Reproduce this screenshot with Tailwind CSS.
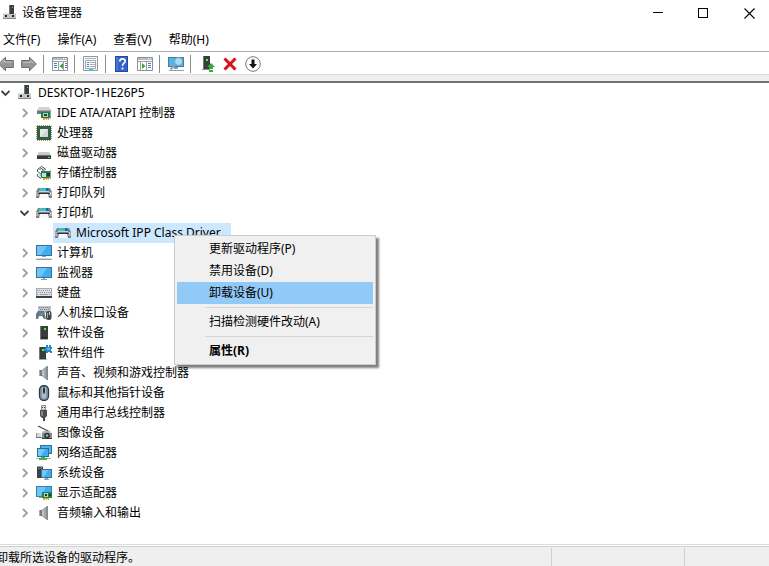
<!DOCTYPE html>
<html lang="zh-CN">
<head>
    <meta charset="UTF-8">
    <meta name="viewport" content="width=device-width, initial-scale=1.0">
    <title>设备管理器</title>
    <script src="https://cdn.jsdelivr.net/npm/@tailwindcss/browser@4"></script>
</head>
<body class="bg-white text-black text-[12px] leading-5 font-['Noto_Sans','Noto_Sans_CJK_SC',sans-serif]">

    <!-- Iconos -->
    <svg class="absolute size-0" aria-hidden="true">
        <symbol id="i-root" viewBox="0 0 16 16">
            <path d="M7 0h5v9H7z" fill="#3c3f3f"/><path d="M7 0h1v9H7z" fill="#777"/><path d="M10 2h1v1h-1z" fill="#3f3"/>
            <path d="M3 8h4v1h5V8h1l1 1v5H1v-5z" fill="#c3c7ca"/><path d="M3 8h4v1h5V8h1l1 1H1z" fill="#e0e2e4"/>
            <path d="M3 10h2v2H3zM10 10h2v2h-2z" fill="#222"/><path d="M1 13h13v1H1z" fill="#85898c"/>
        </symbol>
        <symbol id="i-ide" viewBox="0 0 16 16">
            <path d="M3 2h10l2 3H1z" fill="#d2d4d6"/><path d="M1 5h14v4H1z" fill="#70767a"/><path d="M1 5h14v1H1z" fill="#a7acaf"/>
            <path d="M5 7h10v6H5z" fill="#1f7a4c"/><path d="M7 8h5v4H7z" fill="#a5d8bd"/><path d="M8 9h3v2H8z" fill="#2b3b34"/>
            <path d="M14 5h1v9h-1z" fill="#9fa3a6"/><path d="M7 13h6v2h-1v-1h-1v1h-1v-1H9v1H7z" fill="#e6a11e"/>
        </symbol>
        <symbol id="i-cpu" viewBox="0 0 16 16">
            <path d="M1 .5h14M1 15.500h14M.5 1v14M15.500 1v14" stroke="#a8924a" stroke-dasharray="1 1" fill="none"/>
            <path d="M1 1h14v14H1z" fill="#2e6146"/><path d="M4 4h8v8H4z" fill="#e6e8e7"/><path d="M4 12L12 4v8z" fill="#d0d4d2"/>
        </symbol>
        <symbol id="i-disk" viewBox="0 0 16 16">
            <path d="M3 7h10l2 3H1z" fill="#c9cbcd"/><path d="M1 10h14v4H1z" fill="#38393b"/><path d="M1 10h14v1H1z" fill="#6c6e70"/><path d="M12 12h2v1h-2z" fill="#3f3"/>
        </symbol>
        <symbol id="i-storage" viewBox="0 0 16 16">
            <path d="M1.500 4.500l4-3 4 2.500-1 1.500M3.500 4.500l2-1 2 1.500-2.500 2M1.500 4.500v2l3.500 2.500M2 9l-1 1.500 4 3" fill="none" stroke="#494d50"/>
            <path d="M3 7.500l3 2.500-2 2z" fill="#b4b7b9"/>
            <path d="M5 6h10v7H5z" fill="#23804f"/><path d="M6 8h4v4H6z" fill="#c5e0d0"/><path d="M11 8h3v3h-3z" fill="#123f2a"/>
            <path d="M14 5h1v9h-1z" fill="#999da0"/><path d="M7 13h6v2h-1v-1h-1v1h-1v-1H9v1H7z" fill="#e6a11e"/>
        </symbol>
        <symbol id="i-printer" viewBox="0 0 16 16">
            <path d="M2 3h12l2 4v6H0V7z" fill="#7b8085"/><path d="M0 7h3v4H0zM13 7h3v4h-3z" fill="#a9adb1"/>
            <path d="M4 3h8l1 3H3z" fill="#4bb8e6"/><path d="M6 3h4v2H6z" fill="#35cf72"/><path d="M10 3h2l1 3h-3z" fill="#1b62d0"/>
            <path d="M3 6h10v1H3z" fill="#b9d6e2"/><path d="M2 8h12v1H2z" fill="#2e3236"/>
            <path d="M4 9h8l1 4H3z" fill="#f4f8fa"/><path d="M14 8h1v1h-1z" fill="#fff"/>
        </symbol>
        <symbol id="i-computer" viewBox="0 0 16 16">
            <path d="M0 0h16v11H0z" fill="#3f6f93"/><path d="M1 1h14v9H1z" fill="#3caef2"/><path d="M1 1h10L5 10H1z" fill="#6cc5f8"/>
            <path d="M6 11h4v1H6z" fill="#8ba3b2"/><path d="M2 13h12l2 1H0z" fill="#cfdae2"/><path d="M0 14h16v1H0z" fill="#8ca0ae"/>
        </symbol>
        <symbol id="i-monitor" viewBox="0 0 16 16">
            <path d="M0 2h16v11H0z" fill="#3f6f93"/><path d="M1 3h14v9H1z" fill="#3caef2"/><path d="M1 3h10L5 12H1z" fill="#6cc5f8"/>
            <path d="M7 13h2v1h2v1H5v-1h2z" fill="#8ba3b2"/>
        </symbol>
        <symbol id="i-keyboard" viewBox="0 0 16 16">
            <path d="M0 3h16v9H0z" fill="#a5abb1"/><path d="M1 4h14v7H1z" fill="#dde1e4"/>
            <path d="M1 5.500h14M2 7.500h13M1 9.500h2M13 9.500h2" stroke="#8f959b" stroke-dasharray="1 1"/><path d="M4 9.500h8" stroke="#9da3a8"/>
            <path d="M0 11h16v2H0z" fill="#3c4146"/>
        </symbol>
        <symbol id="i-hid" viewBox="0 0 16 16">
            <path d="M2 1h13v7H2z" fill="#c3c7ca"/><path d="M3 2.500h11M4 4.500h10M3 6.500h11" stroke="#777e84" stroke-dasharray="1 1"/>
            <path d="M2 6h6l2 8H8l-2-3H3l-1 3H0V9z" fill="#6d757c"/><path d="M3 7h2v3H3z" fill="#2a8ade"/><path d="M5 9h1v1H5z" fill="#f7a51c"/><path d="M6 8h1v1H6z" fill="#3cd354"/>
            <rect x="10" y="6" width="5.500" height="9" rx="2.500" fill="#40484f"/><path d="M11 8h1v5h-1z" fill="#9aa8b4"/><path d="M13 7h1v3h-1z" fill="#d1d8de"/>
        </symbol>
        <symbol id="i-tower" viewBox="0 0 16 16">
            <path d="M4 1h8v14H4z" fill="#3a3d3e"/><path d="M4 1h1v13H4z" fill="#777"/><path d="M8 3h2v2H8z" fill="#3dff3d"/><path d="M4 14h8v1H4z" fill="#a7aaab"/><path d="M5 12h6v1H5z" fill="#242626"/>
        </symbol>
        <symbol id="i-component" viewBox="0 0 16 16">
            <path d="M3 2h7v13H3z" fill="#3a3d3e"/><path d="M3 2h1v13H3z" fill="#777"/><path d="M6 4h2v2H6z" fill="#3dff3d"/><path d="M3 14h8v1H3z" fill="#a7aaab"/>
            <path d="M9 2h1V0h2v2h1V0h2v2h1v2h-1v2h1v2h-2V7h-2v1h-2V6H8V4h1z" fill="#2388cf"/><path d="M11 3h3v2h-3z" fill="#67b8ee"/>
        </symbol>
        <symbol id="i-speaker" viewBox="0 0 16 16">
            <path d="M3 5h3v6H3z" fill="#767d82"/><path d="M3 5h1v6H3z" fill="#a4aaae"/><path d="M6 5l5-4h1v14h-1l-5-4z" fill="#858d93"/><path d="M6 6l4-3v10l-4-3z" fill="#c2c8cc"/><path d="M8 5l2-2v10l-2-2z" fill="#a1a8ad"/>
        </symbol>
        <symbol id="i-mouse" viewBox="0 0 16 16">
            <rect x="3.500" y=".5" width="9" height="15" rx="4.500" fill="#8599aa" stroke="#2f3942" stroke-width="1.300"/>
            <path d="M6 3v9c1 2 3 2 4 0V3c-1-1.300-3-1.300-4 0z" fill="#acbdcb"/><path d="M8 1v8" stroke="#3c4851"/><rect x="7" y="3" width="2" height="5" rx="1" fill="#273038"/>
        </symbol>
        <symbol id="i-usb" viewBox="0 0 16 16">
            <path d="M5.500.5h4V5h-4z" fill="#e1e3e4" stroke="#8b8f92"/><path d="M6 2h1v1H6zM8 2h1v1H8z" fill="#444"/>
            <path d="M4 5h7v6l-2 2H6l-2-2z" fill="#4a4e50"/><path d="M5 6h2v5H5z" fill="#85898b"/><path d="M7 13h2v3H7z" fill="#444"/>
        </symbol>
        <symbol id="i-camera" viewBox="0 0 16 16">
            <path d="M2 1l12 6" stroke="#4b4f52" stroke-width="1.300"/><path d="M7 6h7l1 2H6z" fill="#aeb3b6"/><path d="M0 8h5v4H0z" fill="#d4d7d9"/><path d="M0 12h6v1H0z" fill="#6d7275"/><path d="M0 8h1v4H0z" fill="#8b9093"/>
            <path d="M6 8h10v6H6z" fill="#868c90"/><path d="M6 13h10v1H6z" fill="#383c3e"/><circle cx="11" cy="10.500" r="2.800" fill="#2c3133"/><circle cx="11" cy="10.500" r="1.300" fill="#7cc6a6"/>
        </symbol>
        <symbol id="i-network" viewBox="0 0 16 16">
            <path d="M4 0h12v9H4z" fill="#2d6f9b"/><path d="M5 1h10v7H5z" fill="#4ab7f3"/><path d="M1 3h12v9H1z" fill="#2d6f9b"/><path d="M2 4h10v7H2z" fill="#3caef2"/><path d="M2 4h7l-4 7H2z" fill="#74cafa"/>
            <path d="M0 13h15v1H0z" fill="#a9b0b4"/><path d="M5 12h4v1h2v2H3v-2h2z" fill="#3eb549"/>
        </symbol>
        <symbol id="i-system" viewBox="0 0 16 16">
            <path d="M1 1h6v12H1z" fill="#3c4143"/><path d="M1 1h6v1H1z" fill="#9da2a5"/><path d="M2 3h3v1H2z" fill="#767c80"/><path d="M5 2h1v1H5z" fill="#3f3"/>
            <path d="M5 4h11v9H5z" fill="#3f6f93"/><path d="M6 5h9v7H6z" fill="#3caef2"/><path d="M6 5h6l-4 7H6z" fill="#73c9fa"/><path d="M9 13h3v1h1v1H8v-1h1z" fill="#8ba3b2"/>
        </symbol>
        <symbol id="i-display" viewBox="0 0 16 16">
            <path d="M0 1h16v11H0z" fill="#3f7da7"/><path d="M1 2h14v9H1z" fill="#3caef2"/><path d="M1 2h9L5 11H1z" fill="#6cc5f8"/><path d="M3 12h4v1H3z" fill="#8ba3b2"/>
            <path d="M6 7h10v6H6z" fill="#23804f"/><path d="M8 8h4v4H8z" fill="#a5d8bd"/><path d="M9 9h2v2H9zM13 9h2v2h-2z" fill="#173a29"/><path d="M7 13h6v2h-1v-1h-1v1h-1v-1H9v1H7z" fill="#e6a11e"/>
        </symbol>
        <symbol id="i-closed" viewBox="0 0 10 10"><path d="M4 1l4 4-4 4" fill="none" stroke="#a0a0a0" stroke-width="1.800"/></symbol>
        <symbol id="i-open" viewBox="0 0 10 10"><path d="M1.500 3l4 4 4-4" fill="none" stroke="#404040" stroke-width="1.800"/></symbol>
    </svg>

    <div class="flex h-screen flex-col overflow-hidden">
        <header class="flex h-[26px] items-center justify-between pl-0.5">
            <h1 class="flex items-center gap-1">
                <svg class="size-4"><use href="#i-root"/></svg>设备管理器
            </h1>
            <div class="-mr-[3px] flex">
                <button aria-label="最小化" class="flex h-6 w-[46px] items-center justify-center"><svg class="h-[11px] w-[11px]" viewBox="0 0 11 11"><path d="M1 4.500h10" stroke="#000"/></svg></button>
                <button aria-label="最大化" class="flex h-6 w-[46px] items-center justify-center"><svg class="h-[11px] w-[11px]" viewBox="0 0 11 11" shape-rendering="crispEdges"><path d="M.5 .5h9v9h-9z" fill="none" stroke="#000"/></svg></button>
                <button aria-label="关闭" class="flex h-6 w-[46px] items-center justify-center"><svg class="h-[11px] w-[11px]" viewBox="0 0 11 11"><path d="M.5 .5l10 10M10.500 .5l-10 10" stroke="#000" stroke-width="1.100"/></svg></button>
            </div>
        </header>

        <nav class="flex h-[25px] items-center gap-[17px] pt-[3px] pl-[3px]">
            <button>文件(F)</button>
            <button>操作(A)</button>
            <button>查看(V)</button>
            <button>帮助(H)</button>
        </nav>

        <div class="-ml-1.5 flex h-6 shrink-0 items-center border-y border-t-[#adadb1] border-b-[#dcdcdc] pt-0.5">
            <button aria-label="后退" class="w-[23px] pl-1"><svg class="size-4" viewBox="0 0 16 16"><path d="M.7 8L7.500 1.200v3.300h7.800v7H7.500v3.300z" fill="#969696" stroke="#6b6b6b"/><path d="M3 7.500l3.500-3.500v2h8" fill="none" stroke="#bdbdbd"/></svg></button>
            <button aria-label="前进" class="w-[23px] pl-1"><svg class="size-4" viewBox="0 0 16 16"><path d="M15.300 8L8.500 1.200v3.300H.7v7h7.800v3.300z" fill="#969696" stroke="#6b6b6b"/><path d="M2 6.500h7.500v-2l3 3" fill="none" stroke="#bdbdbd"/></svg></button>
            <span class="mr-1 ml-[3px] h-[18px] w-px bg-[#8d8d8d]"></span>
            <button aria-label="显示/隐藏控制台树" class="w-[23px] pl-1"><svg class="size-4" viewBox="0 0 16 16"><path d="M.5 1.500h15v13H.5z" fill="#fff" stroke="#8b9197"/><path d="M1 2h14v2H1z" fill="#b5bbc1"/><path d="M11 2.500h1M13 2.500h1" stroke="#fff"/><path d="M1 5.500h14M6.500 6v8M11.500 6v8" stroke="#9ba1a7"/><path d="M2 7.500h3M2 9.500h3M2 11.500h3M13 7.500h2M13 9.500h2M13 11.500h2" stroke="#4b7db8"/><path d="M11 7v6L7.500 10z" fill="#36a832"/></svg></button>
            <span class="mr-1 ml-[3px] h-[18px] w-px bg-[#8d8d8d]"></span>
            <button aria-label="属性" class="w-[23px] pl-1"><svg class="size-4" viewBox="0 0 16 16"><path d="M.5.5h14v14H.5z" fill="#f7f8f9" stroke="#9298a0"/><path d="M2 2.500h11" stroke="#b0b5ba"/><path d="M2.500 4.500h10v8h-10z" fill="#fff" stroke="#a6abb0"/><path d="M4 6.500h2M4 8.500h2M4 10.500h2" stroke="#4b7db8"/><path d="M7 6.500h5M7 8.500h5M7 10.500h5" stroke="#a9aeb4"/><path d="M6 13h4v2H6z" fill="#35c2ef"/></svg></button>
            <span class="mr-1 ml-[3px] h-[18px] w-px bg-[#8d8d8d]"></span>
            <button aria-label="帮助" class="w-[23px] pl-1"><svg class="size-4" viewBox="0 0 16 16"><path d="M1 0h13v16H1z" fill="#2548a8"/><path d="M2 1h2v14H2z" fill="#5077cf"/><path d="M4 1h9v14H4z" fill="#3562c4"/><path d="M5.800 5.500c0-3.500 5.400-3.500 5.400-.4 0 2.100-2.700 2-2.700 4.700M8.500 11.500v2" fill="none" stroke="#fff" stroke-width="1.700"/></svg></button>
            <button aria-label="显示/隐藏操作窗格" class="w-[23px] pl-1"><svg class="size-4" viewBox="0 0 16 16"><path d="M.5 1.500h15v13H.5z" fill="#fff" stroke="#8b9197"/><path d="M1 2h14v2H1z" fill="#b5bbc1"/><path d="M11 2.500h1M13 2.500h1" stroke="#fff"/><path d="M1 5.500h14M3.500 6v8M9.500 6v8" stroke="#9ba1a7"/><path d="M11 7.500h3M11 9.500h3M11 11.500h3" stroke="#4b7db8"/><path d="M5 7v6l3.500-3z" fill="#36a832"/></svg></button>
            <span class="mr-1 ml-[3px] h-[18px] w-px bg-[#8d8d8d]"></span>
            <button aria-label="扫描检测硬件改动" class="w-[23px] pl-1"><svg class="size-4" viewBox="0 0 16 16"><path d="M0 1h16v10H0z" fill="#3c7eaa"/><path d="M1 2h14v8H1z" fill="#52b6e9"/><path d="M6 11h4v2H6z" fill="#7fa2b6"/><path d="M1 14.500h15" stroke="#8ba3b2"/><circle cx="10.500" cy="5.500" r="4" fill="#a4dcf7" stroke="#779eb7"/><path d="M7.500 8.500l-5 5" stroke="#9d9fa1" stroke-width="2"/></svg></button>
            <span class="mr-1 ml-[3px] h-[18px] w-px bg-[#8d8d8d]"></span>
            <button aria-label="更新驱动程序" class="w-[23px] pl-1"><svg class="size-4" viewBox="0 0 16 16"><path d="M4 0h7v13H4z" fill="#3a3d3e"/><path d="M4 0h1v13H4z" fill="#777"/><path d="M7 3h2v2H7z" fill="#3dff3d"/><path d="M3 13h8v1H3z" fill="#8a8d8e"/><path d="M12 7l4 4h-2v2h-4v-2H8zM10 14h4v2h-4z" fill="#2fae3c"/></svg></button>
            <button aria-label="卸载设备" class="w-[23px] pl-1"><svg class="size-4" viewBox="0 0 16 16"><path d="M2.500 2.500l11 11M13.500 2.500l-11 11" stroke="#d90f1b" stroke-width="3"/></svg></button>
            <button aria-label="禁用设备" class="w-[23px] pl-1"><svg class="size-4" viewBox="0 0 16 16"><circle cx="8" cy="8" r="7.300" fill="#fff" stroke="#777"/><path d="M6.500 3.500h3V8H12l-4 4.500L4 8h2.500z" fill="#111"/></svg></button>
        </div>
        <div class="h-2 shrink-0 border-b-2 border-b-[#717171] bg-[#efefef]"></div>

        <main class="min-h-0 flex-1 overflow-hidden">
            <ul id="tree" role="tree" aria-label="设备"></ul>
        </main>

        <footer class="mt-px border-t border-[#dcdcdc] pt-px">
            <div class="flex h-5 border-t border-[#d0d0d0] bg-[#efefef]">
                <p class="-ml-1 flex-1 leading-[22px] whitespace-nowrap">卸载所选设备的驱动程序。</p>
                <span class="mt-px w-[133px] border-l border-[#d0d0d0]"></span>
                <span class="mt-px w-[85px] border-l border-[#d0d0d0]"></span>
            </div>
        </footer>
    </div>

    <!-- Menú contextual del dispositivo seleccionado -->
    <div role="menu" class="absolute top-[235px] left-[174px] w-[202px] border border-[#cccccc] bg-[#f0f0f0] p-0.5 leading-[22px] shadow-[3px_3px_2px_rgba(0,0,0,0.5)]">
        <button role="menuitem" class="block h-[22px] w-full pl-8 text-left hover:bg-[#91c9f7]">更新驱动程序(P)</button>
        <button role="menuitem" class="block h-[22px] w-full pl-8 text-left hover:bg-[#91c9f7]">禁用设备(D)</button>
        <button role="menuitem" class="block h-[22px] w-full bg-[#91c9f7] pl-8 text-left">卸载设备(U)</button>
        <hr class="my-[3px] ml-7 border-[#d5d5d5]">
        <button role="menuitem" class="block h-[22px] w-full pl-8 text-left hover:bg-[#91c9f7]">扫描检测硬件改动(A)</button>
        <hr class="my-[3px] ml-7 border-[#d5d5d5]">
        <button role="menuitem" class="block h-[22px] w-full pl-8 text-left font-bold hover:bg-[#91c9f7]">属性(R)</button>
    </div>

    <script>
        const tree = document.getElementById('tree');

        // nivel, icono, nombre, estado
        const devices = [
            [0, 'root', 'DESKTOP-1HE26P5', 'open'],
            [1, 'ide', 'IDE ATA/ATAPI 控制器', 'closed'],
            [1, 'cpu', '处理器', 'closed'],
            [1, 'disk', '磁盘驱动器', 'closed'],
            [1, 'storage', '存储控制器', 'closed'],
            [1, 'printer', '打印队列', 'closed'],
            [1, 'printer', '打印机', 'open'],
            [2, 'printer', 'Microsoft IPP Class Driver', ''],
            [1, 'computer', '计算机', 'closed'],
            [1, 'monitor', '监视器', 'closed'],
            [1, 'keyboard', '键盘', 'closed'],
            [1, 'hid', '人机接口设备', 'closed'],
            [1, 'tower', '软件设备', 'closed'],
            [1, 'component', '软件组件', 'closed'],
            [1, 'speaker', '声音、视频和游戏控制器', 'closed'],
            [1, 'mouse', '鼠标和其他指针设备', 'closed'],
            [1, 'usb', '通用串行总线控制器', 'closed'],
            [1, 'camera', '图像设备', 'closed'],
            [1, 'network', '网络适配器', 'closed'],
            [1, 'system', '系统设备', 'closed'],
            [1, 'display', '显示适配器', 'closed'],
            [1, 'speaker', '音频输入和输出', 'closed']
        ];
        const indent = ['pl-0', 'pl-[19px]', 'pl-[53px]'];

        devices.forEach(([level, icon, name, state]) => {
            const li = document.createElement('li');
            li.setAttribute('role', 'treeitem');
            li.setAttribute('aria-level', level + 1);
            li.className = `flex h-5 items-center whitespace-nowrap ${indent[level]}`;
            const toggle = state
                ? `<button aria-label="${name}" class="mr-[7px] size-[10px]"><svg class="size-[10px]"><use href="#i-${state}"/></svg></button>`
                : '';
            const selected = state ? '' : 'bg-[#cce8ff] pl-0.5 pr-2.5';
            li.innerHTML = `${toggle}<span class="flex items-center gap-[5px] ${selected}"><svg class="size-4"><use href="#i-${icon}"/></svg>${name}</span>`;
            tree.appendChild(li);
        });
    </script>
</body>
</html>
